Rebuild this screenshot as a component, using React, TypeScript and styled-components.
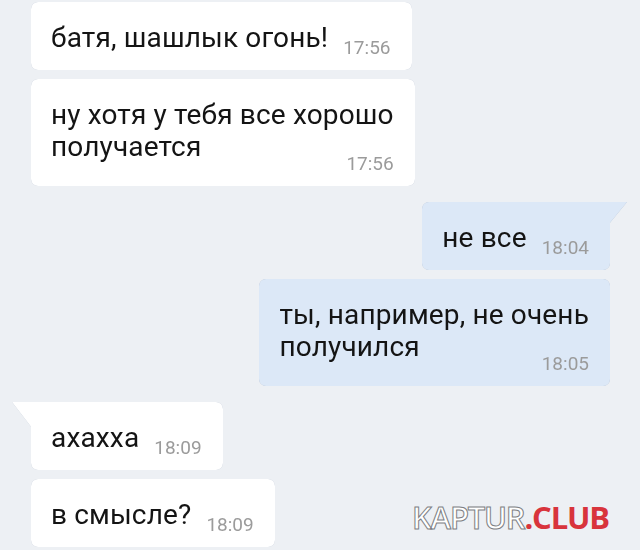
import React from 'react';
import styled, { createGlobalStyle, css } from 'styled-components';

const GlobalStyle = createGlobalStyle`
  html,
  body {
    margin: 0;
    padding: 0;
    background: #edf0f4;
  }

  body {
    font-family: Roboto, 'Noto Sans', 'Liberation Sans', sans-serif;
  }
`;

const Screen = styled.div`
  position: relative;
  width: 640px;
  height: 550px;
  box-sizing: border-box;
  padding: 2px 30px 0 31px;
  overflow: hidden;
  display: flex;
  flex-direction: column;
  gap: 16px;
`;

const Group = styled.div<{ $out?: boolean }>`
  display: flex;
  flex-direction: column;
  gap: 9px;
  align-items: ${(p) => (p.$out ? 'flex-end' : 'flex-start')};
`;

const Text = styled.div`
  font-size: 28px;
  line-height: 32px;
  letter-spacing: 0.15px;
  color: #141414;
  white-space: nowrap;
`;

const Time = styled.span`
  font-size: 19px;
  line-height: 12px;
  color: #9b9b9b;
  white-space: nowrap;
`;

const Bubble = styled.div<{ $out?: boolean; $tail?: boolean; $multi?: boolean }>`
  position: relative;
  display: grid;
  grid-template-columns: auto auto;
  column-gap: 15px;
  align-items: end;
  padding: 20px 21px 16px 20px;
  border-radius: 7px;
  background: ${(p) => (p.$out ? '#dce8f7' : '#ffffff')};
  filter: drop-shadow(0 0 0.7px rgba(70, 95, 130, 0.35));

  ${(p) =>
    p.$multi &&
    css`
      grid-template-columns: auto;
      grid-template-areas: 'body';

      ${Text}, ${Time} {
        grid-area: body;
      }

      ${Text} {
        margin-bottom: 7px;
      }

      ${Time} {
        justify-self: end;
      }
    `}

  ${(p) =>
    p.$tail &&
    p.$out &&
    css`
      border-top-right-radius: 0;

      &::before {
        content: '';
        position: absolute;
        top: 0;
        right: -17px;
        width: 18px;
        height: 22px;
        background: inherit;
        clip-path: polygon(0 0, 100% 0, 0 100%);
      }
    `}

  ${(p) =>
    p.$tail &&
    !p.$out &&
    css`
      border-top-left-radius: 0;

      &::before {
        content: '';
        position: absolute;
        top: 0;
        left: -19px;
        width: 20px;
        height: 26px;
        background: inherit;
        clip-path: polygon(0 0, 100% 0, 100% 100%);
      }
    `}
`;

const Watermark = styled.div`
  position: absolute;
  top: 502px;
  left: 412px;
  font-family: 'Open Sans', 'Liberation Sans', sans-serif;
  font-weight: 700;
  font-size: 31px;
  line-height: 30px;
  letter-spacing: -1.2px;
  white-space: nowrap;
`;

const Outline = styled.span`
  color: #ffffff;
  -webkit-text-stroke: 1px #7d7f83;
  font-weight: 600;
`;

const Red = styled.span`
  color: #d8343c;
`;

type Message = {
  lines: string[];
  time: string;
  tail?: boolean;
};

type Thread = {
  out?: boolean;
  messages: Message[];
};

const threads: Thread[] = [
  {
    messages: [
      { lines: ['батя, шашлык огонь!'], time: '17:56' },
      { lines: ['ну хотя у тебя все хорошо', 'получается'], time: '17:56' },
    ],
  },
  {
    out: true,
    messages: [
      { lines: ['не все'], time: '18:04', tail: true },
      { lines: ['ты, например, не очень', 'получился'], time: '18:05' },
    ],
  },
  {
    messages: [
      { lines: ['ахахха'], time: '18:09', tail: true },
      { lines: ['в смысле?'], time: '18:09' },
    ],
  },
];

const App = () => {
  return (
    <>
      <GlobalStyle />
      <Screen>
        {threads.map((thread, i) => (
          <Group key={i} $out={thread.out}>
            {thread.messages.map((msg, j) => (
              <Bubble
                key={j}
                $out={thread.out}
                $tail={msg.tail}
                $multi={msg.lines.length > 1}
              >
                <Text>
                  {msg.lines.map((line, k) => (
                    <React.Fragment key={k}>
                      {k > 0 && <br />}
                      {line}
                    </React.Fragment>
                  ))}
                </Text>
                <Time>{msg.time}</Time>
              </Bubble>
            ))}
          </Group>
        ))}
        <Watermark>
          <Outline>KAPTUR</Outline>
          <Red>.CLUB</Red>
        </Watermark>
      </Screen>
    </>
  );
};

export default App;
